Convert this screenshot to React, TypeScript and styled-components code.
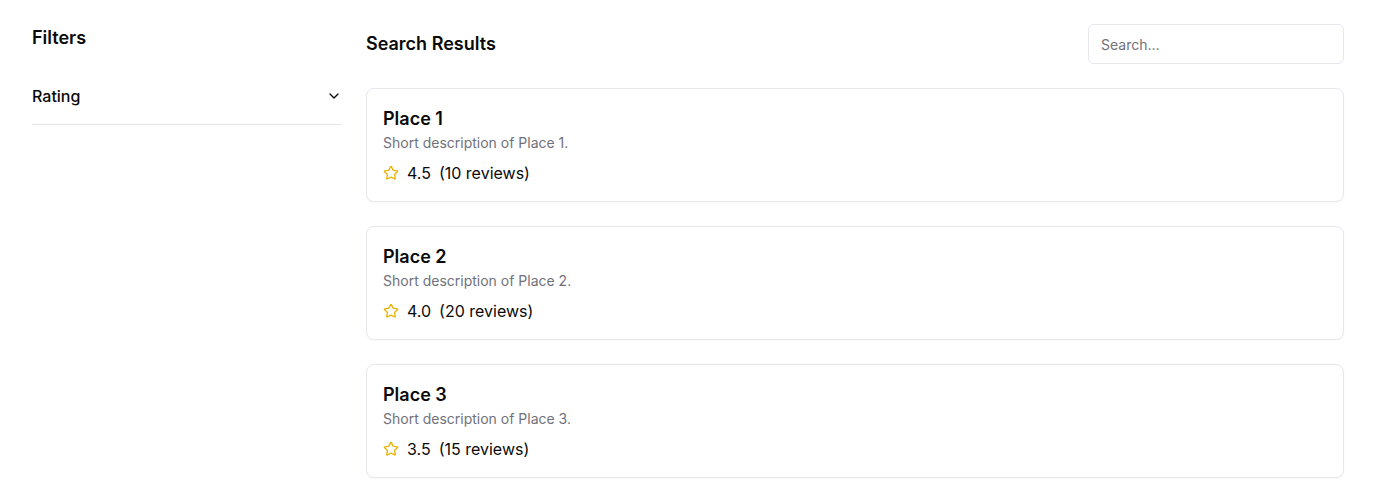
import React from "react";
import styled, { createGlobalStyle } from "styled-components";

const Global = createGlobalStyle`
  * { box-sizing: border-box; }
  body { margin: 0; font-family: Inter, "Noto Sans", sans-serif; color: #0a0a0a; background: #fff; }
`;

const Page = styled.div`
  display: flex;
  gap: 24px;
  padding: 24px 32px;
`;

const Sidebar = styled.aside`
  width: 310px;
  flex-shrink: 0;
`;

const SideTitle = styled.h2`
  margin: 0 0 16px;
  font-size: 18px;
  line-height: 28px;
  font-weight: 600;
`;

const AccordionItem = styled.div`
  border-bottom: 1px solid #e5e7eb;
`;

const Trigger = styled.button`
  display: flex;
  width: 100%;
  align-items: center;
  justify-content: space-between;
  padding: 16px 0;
  background: none;
  border: none;
  font: inherit;
  font-size: 16px;
  line-height: 24px;
  font-weight: 500;
  color: #0a0a0a;
  cursor: pointer;
`;

const Main = styled.main`
  flex: 1;
  display: flex;
  flex-direction: column;
  gap: 24px;
`;

const Header = styled.div`
  display: flex;
  align-items: center;
  justify-content: space-between;
`;

const Title = styled.h1`
  margin: 0;
  font-size: 18px;
  line-height: 28px;
  font-weight: 600;
`;

const SearchInput = styled.input`
  width: 256px;
  height: 40px;
  border: 1px solid #e5e7eb;
  border-radius: 6px;
  padding: 0 12px;
  font: inherit;
  font-size: 14px;
  color: #0a0a0a;
  outline: none;
  &::placeholder { color: #71717a; }
`;

const List = styled.div`
  display: flex;
  flex-direction: column;
  gap: 24px;
`;

const Card = styled.div`
  border: 1px solid #e5e7eb;
  border-radius: 8px;
  padding: 16px;
  background: #fff;
  box-shadow: 0 1px 2px rgba(0,0,0,0.03);
`;

const CardTitle = styled.h3`
  margin: 0;
  font-size: 18px;
  line-height: 28px;
  font-weight: 600;
`;

const Desc = styled.p`
  margin: 0;
  font-size: 14px;
  line-height: 20px;
  color: #71717a;
`;

const RatingRow = styled.div`
  margin-top: 8px;
  display: flex;
  align-items: center;
  gap: 8px;
  font-size: 16px;
  line-height: 24px;
`;

const Star = () => (
  <svg width="16" height="16" viewBox="0 0 24 24" fill="none" stroke="#eab308" strokeWidth="2" strokeLinecap="round" strokeLinejoin="round">
    <path d="M11.525 2.295a.53.53 0 0 1 .95 0l2.31 4.679a2.123 2.123 0 0 0 1.595 1.16l5.166.756a.53.53 0 0 1 .294.904l-3.736 3.638a2.123 2.123 0 0 0-.611 1.878l.882 5.14a.53.53 0 0 1-.771.56l-4.618-2.428a2.122 2.122 0 0 0-1.973 0L6.396 21.01a.53.53 0 0 1-.77-.56l.881-5.139a2.122 2.122 0 0 0-.611-1.879L2.16 9.795a.53.53 0 0 1 .294-.906l5.165-.755a2.122 2.122 0 0 0 1.597-1.16z" />
  </svg>
);

const Chevron = () => (
  <svg width="16" height="16" viewBox="0 0 24 24" fill="none" stroke="#0a0a0a" strokeWidth="2" strokeLinecap="round" strokeLinejoin="round">
    <path d="m6 9 6 6 6-6" />
  </svg>
);

const places = [
  { name: "Place 1", rating: "4.5", reviews: 10 },
  { name: "Place 2", rating: "4.0", reviews: 20 },
  { name: "Place 3", rating: "3.5", reviews: 15 },
];

export default function App() {
  return (
    <>
      <Global />
      <Page>
        <Sidebar>
          <SideTitle>Filters</SideTitle>
          <AccordionItem>
            <Trigger>
              Rating
              <Chevron />
            </Trigger>
          </AccordionItem>
        </Sidebar>
        <Main>
          <Header>
            <Title>Search Results</Title>
            <SearchInput placeholder="Search..." />
          </Header>
          <List>
            {places.map((p) => (
              <Card key={p.name}>
                <CardTitle>{p.name}</CardTitle>
                <Desc>Short description of {p.name}.</Desc>
                <RatingRow>
                  <Star />
                  <span>{p.rating}</span>
                  <span>({p.reviews} reviews)</span>
                </RatingRow>
              </Card>
            ))}
          </List>
        </Main>
      </Page>
    </>
  );
}
